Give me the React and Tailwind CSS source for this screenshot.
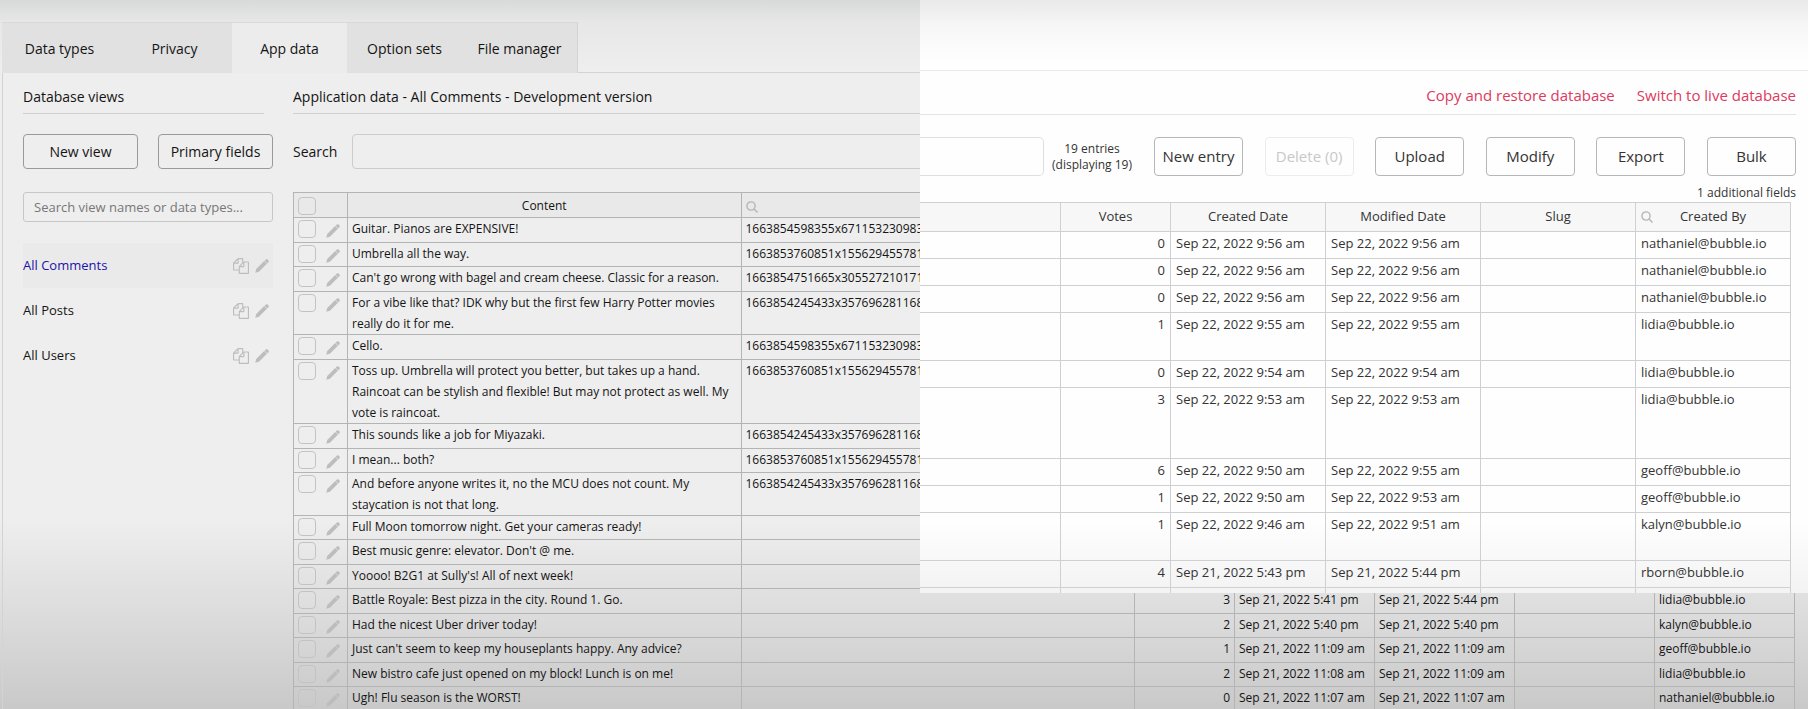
import React from "react";

const ROWS = [
  { lines: 1, text: "Guitar. Pianos are EXPENSIVE!", id: "1663854598355x671153230983", v: 0, c: "Sep 22, 2022 9:56 am", m: "Sep 22, 2022 9:56 am", by: "nathaniel@bubble.io" },
  { lines: 1, text: "Umbrella all the way.", id: "1663853760851x155629455781", v: 0, c: "Sep 22, 2022 9:56 am", m: "Sep 22, 2022 9:56 am", by: "nathaniel@bubble.io" },
  { lines: 1, text: "Can't go wrong with bagel and cream cheese. Classic for a reason.", id: "1663854751665x305527210171", v: 0, c: "Sep 22, 2022 9:56 am", m: "Sep 22, 2022 9:56 am", by: "nathaniel@bubble.io" },
  { lines: 2, text: "For a vibe like that? IDK why but the first few Harry Potter movies really do it for me.", id: "1663854245433x357696281168", v: 1, c: "Sep 22, 2022 9:55 am", m: "Sep 22, 2022 9:55 am", by: "lidia@bubble.io" },
  { lines: 1, text: "Cello.", id: "1663854598355x671153230983", v: 0, c: "Sep 22, 2022 9:54 am", m: "Sep 22, 2022 9:54 am", by: "lidia@bubble.io" },
  { lines: 3, text: "Toss up. Umbrella will protect you better, but takes up a hand. Raincoat can be stylish and flexible! But may not protect as well. My vote is raincoat.", id: "1663853760851x155629455781", v: 3, c: "Sep 22, 2022 9:53 am", m: "Sep 22, 2022 9:53 am", by: "lidia@bubble.io" },
  { lines: 1, text: "This sounds like a job for Miyazaki.", id: "1663854245433x357696281168", v: 6, c: "Sep 22, 2022 9:50 am", m: "Sep 22, 2022 9:55 am", by: "geoff@bubble.io" },
  { lines: 1, text: "I mean... both?", id: "1663853760851x155629455781", v: 1, c: "Sep 22, 2022 9:50 am", m: "Sep 22, 2022 9:53 am", by: "geoff@bubble.io" },
  { lines: 2, text: "And before anyone writes it, no the MCU does not count. My staycation is not that long.", id: "1663854245433x357696281168", v: 1, c: "Sep 22, 2022 9:46 am", m: "Sep 22, 2022 9:51 am", by: "kalyn@bubble.io" },
  { lines: 1, text: "Full Moon tomorrow night. Get your cameras ready!", v: 4, c: "Sep 21, 2022 5:43 pm", m: "Sep 21, 2022 5:44 pm", by: "rborn@bubble.io" },
  { lines: 1, text: "Best music genre: elevator. Don't @ me." },
  { lines: 1, text: "Yoooo! B2G1 at Sully's! All of next week!" },
  { lines: 1, text: "Battle Royale: Best pizza in the city. Round 1. Go.", v: 3, c: "Sep 21, 2022 5:41 pm", m: "Sep 21, 2022 5:44 pm", by: "lidia@bubble.io" },
  { lines: 1, text: "Had the nicest Uber driver today!", v: 2, c: "Sep 21, 2022 5:40 pm", m: "Sep 21, 2022 5:40 pm", by: "kalyn@bubble.io" },
  { lines: 1, text: "Just can't seem to keep my houseplants happy. Any advice?", v: 1, c: "Sep 21, 2022 11:09 am", m: "Sep 21, 2022 11:09 am", by: "geoff@bubble.io" },
  { lines: 1, text: "New bistro cafe just opened on my block! Lunch is on me!", v: 2, c: "Sep 21, 2022 11:08 am", m: "Sep 21, 2022 11:09 am", by: "lidia@bubble.io" },
  { lines: 1, text: "Ugh! Flu season is the WORST!", v: 0, c: "Sep 21, 2022 11:07 am", m: "Sep 21, 2022 11:07 am", by: "nathaniel@bubble.io" },
];

// The magnified panel shows the first ten rows; the last rows remain readable beneath it.
const PANEL_ROWS = ROWS.slice(0, 10);
const FIRST_UNCOVERED = 12;
const PANEL_HEIGHT = { 1: "h-[27px]", 2: "h-12", 3: "h-[71px]" };

const TABS = ["Data types", "Privacy", "App data", "Option sets", "File manager"];
const VIEWS = ["All Comments", "All Posts", "All Users"];
const ACTIONS = ["New entry", "Delete (0)", "Upload", "Modify", "Export", "Bulk"];

function Pencil() {
  return (
    <svg viewBox="0 0 14 14" className="size-3.5 fill-[#bcbebd]" aria-hidden="true">
      <path d="M0.3 13.7 1.2 10.1 9.2 2.1 11.9 4.8 3.9 12.8ZM9.6 1.7 10.8 0.6Q11.8 -0.2 12.7 0.6L13.4 1.3Q14.2 2.2 13.4 3.2L12.3 4.4Z" />
    </svg>
  );
}

function Files() {
  return (
    <svg viewBox="0 0 1792 1792" className="size-4 fill-[#bcbebd]" aria-hidden="true">
      <path d="M1696 384q40 0 68 28t28 68v1216q0 40-28 68t-68 28h-960q-40 0-68-28t-28-68v-288h-544q-40 0-68-28t-28-68v-672q0-40 20-88t48-76l408-408q28-28 76-48t88-20h416q40 0 68 28t28 68v328q68-40 128-40h416zm-544 213l-299 299h299v-299zm-640-384l-299 299h299v-299zm196 647l316-316v-416h-384v416q0 40-28 68t-68 28h-416v640h512v-256q0-40 20-88t48-76zm956 804v-1152h-384v416q0 40-28 68t-68 28h-416v640h896z" />
    </svg>
  );
}

function Magnifier() {
  return (
    <svg viewBox="0 0 12 12" className="size-3 fill-none stroke-[#b4b6b5] stroke-[1.4]" aria-hidden="true">
      <circle cx="5" cy="5" r="4.1" />
      <path d="M8 8 11.5 11.5" />
    </svg>
  );
}

function Check({ label }) {
  return (
    <input
      type="checkbox"
      aria-label={label}
      className="block size-[18px] shrink-0 appearance-none rounded-[4px] border border-[#c2c4c3]"
    />
  );
}

function Sidebar() {
  return (
    <aside className="w-[250px] shrink-0">
      <h2 className="mr-[9px] h-[41px] border-b border-[#cfd0d0] pt-3 text-[14px] leading-6">Database views</h2>
      <div className="mt-5 flex justify-between">
        {["New view", "Primary fields"].map((b) => (
          <button key={b} type="button" className="h-[35px] w-[115px] rounded-[4px] border border-[#999b9b] text-[14px]">
            {b}
          </button>
        ))}
      </div>
      <input
        type="search"
        aria-label="Search view names or data types"
        placeholder="Search view names or data types..."
        className="mt-[23px] block h-[30px] w-full rounded-[3px] border border-[#c6c8c8] px-2.5 text-[13px] placeholder:text-[#777]"
      />
      <ul className="mt-[21px]">
        {VIEWS.map((v, i) => (
          <li key={v} className={`flex h-[45px] items-center ${i === 0 ? "bg-[#eaeaea] text-[#1d12a6]" : ""}`}>
            <a href="#view" className="flex-1 text-[13px]">{v}</a>
            <button type="button" aria-label={`Copy ${v}`} className="mr-1.5"><Files /></button>
            <button type="button" aria-label={`Edit ${v}`} className="mr-1"><Pencil /></button>
          </li>
        ))}
      </ul>
    </aside>
  );
}

function EntriesTable() {
  const cell = "border border-[#b3b4b4] px-1 py-0 align-top";
  return (
    <table className="w-full table-fixed border-collapse text-[12px] leading-[21px]">
      <colgroup>
        <col className="w-[54px]" />
        <col />
        <col />
        <col className="w-[100px]" />
        <col className="w-[140px]" />
        <col className="w-[140px]" />
        <col className="w-[140px]" />
        <col className="w-[140px]" />
      </colgroup>
      <thead>
        <tr className="h-[25px] bg-black/[0.02]">
          <th className={`${cell} pt-1`}><Check label="Select all" /></th>
          <th className={`${cell} pt-0.5 font-normal`}>Content</th>
          <th className={`${cell} pt-2`}><Magnifier /></th>
          <th className={cell} /><th className={cell} /><th className={cell} /><th className={cell} /><th className={cell} />
        </tr>
      </thead>
      <tbody>
        {ROWS.map((r, i) => {
          const open = i >= FIRST_UNCOVERED;
          return (
            <tr key={r.text} className={r.lines > 1 ? "" : "odd:h-[25px] even:h-6"}>
              <td className={cell}>
                <div className="flex items-start justify-between pt-0.5 pr-[3px]">
                  <Check label={`Select ${r.text}`} />
                  <button type="button" aria-label={`Edit ${r.text}`} className="pt-1"><Pencil /></button>
                </div>
              </td>
              <td className={cell}>{r.text}</td>
              <td className={cell}>{r.id}</td>
              <td className={`${cell} text-right`}>{open && r.v}</td>
              <td className={cell}>{open && r.c}</td>
              <td className={cell}>{open && r.m}</td>
              <td className={cell} />
              <td className={cell}>{open && r.by}</td>
            </tr>
          );
        })}
      </tbody>
    </table>
  );
}

function MagnifiedPanel() {
  const cell = "border border-[#cfd0d2] px-[5px] py-0 align-top";
  const head = `${cell} pt-0.5 font-normal`;
  return (
    <section className="absolute top-0 right-0 left-[920px] h-[593px] overflow-hidden bg-[linear-gradient(#e9e9e9,#f6f6f6_24px,#fefefe_60px,#fefefe_520px,#f3f3f3)] text-[#333]">
      <div className="h-[71px] border-b border-[#ebebeb]" />
      <div className="mr-3 flex h-11 items-center justify-end gap-[22px] border-b border-[#e4e4e4] pt-1.5 text-[15px] text-[#dc3a60]">
        <a href="#copy">Copy and restore database</a>
        <a href="#live">Switch to live database</a>
      </div>
      <div className="mt-[22px] mr-3 flex h-[39px] items-stretch">
        <input type="text" aria-label="Search entries" className="w-0 flex-1 rounded-r-[5px] border border-l-0 border-[#dedede]" />
        <p className="w-[110px] pt-1 pr-3.5 text-center text-[12px] leading-4 whitespace-nowrap">
          19 entries<br />(displaying 19)
        </p>
        <div className="flex w-[642px] justify-between">
          {ACTIONS.map((a) => (
            <button
              key={a}
              type="button"
              disabled={a === "Delete (0)"}
              className="w-[89px] rounded-[4px] border border-[#b4b6b8] text-[15px] whitespace-nowrap disabled:border-[#ececec] disabled:text-[#c8c8c8]"
            >
              {a}
            </button>
          ))}
        </div>
      </div>
      <p className="mt-2 mr-3 text-right text-[12px] leading-[18px]">1 additional fields</p>
      <div className="mr-[17px]">
        <table className="w-full table-fixed border-collapse text-[13px] leading-[23px]">
          <colgroup>
            <col />
            <col className="w-[110px]" />
            <col className="w-[155px]" />
            <col className="w-[155px]" />
            <col className="w-[155px]" />
            <col className="w-[155px]" />
          </colgroup>
          <thead>
            <tr className="h-[29px] bg-[#f7f7f8]">
              <th className={`${head} border-l-0`} />
              <th className={head}>Votes</th>
              <th className={head}>Created Date</th>
              <th className={head}>Modified Date</th>
              <th className={head}>Slug</th>
              <th className={head}>
                <span className="flex items-center">
                  <Magnifier />
                  <span className="flex-1 pr-3">Created By</span>
                </span>
              </th>
            </tr>
          </thead>
          <tbody>
            {PANEL_ROWS.map((r) => (
              <tr key={r.text} className={PANEL_HEIGHT[r.lines]}>
                <td className={`${cell} border-l-0`} />
                <td className={`${cell} text-right`}>{r.v}</td>
                <td className={cell}>{r.c}</td>
                <td className={cell}>{r.m}</td>
                <td className={cell} />
                <td className={cell}>{r.by}</td>
              </tr>
            ))}
            <tr className="h-[27px]">
              <td className={`${cell} border-l-0`} />
              <td className={cell} /><td className={cell} /><td className={cell} /><td className={cell} /><td className={cell} />
            </tr>
          </tbody>
        </table>
      </div>
    </section>
  );
}

export default function App() {
  return (
    <div className="relative h-screen overflow-hidden bg-[linear-gradient(#d8dad9,#e6e7e6_22px,#eeeeee_70px,#eeeeee_520px,#dedede_605px,#c9c9c9)] font-['Open_Sans','Noto_Sans',sans-serif] text-[#141414]">
      <div className="pt-[22px] pl-0.5">
        <nav className="flex h-[51px]">
          {TABS.map((t) => (
            <a
              key={t}
              href="#tab"
              className={`flex w-[115px] items-center justify-center border-t border-[#d8d9d9] text-[14px] ${t === "App data" ? "bg-[#ececec]" : "bg-[#e1e1e1]"}`}
            >
              {t}
            </a>
          ))}
          <div className="flex-1 border-b border-l border-[#d2d3d3]" />
        </nav>
        <div className="flex h-screen gap-5 border-l border-[#d2d3d3] pr-[13px] pl-5">
          <Sidebar />
          <main className="min-w-0 flex-1">
            <h1 className="h-[41px] border-b border-[#cfd0d0] pt-3 text-[14px] leading-6">
              Application data - All Comments - Development version
            </h1>
            <div className="mt-5 mb-[23px] flex h-[35px] items-center">
              <label htmlFor="search" className="w-[59px] text-[14px]">Search</label>
              <input id="search" type="text" className="h-full flex-1 rounded-[4px] border border-[#cbcccc]" />
            </div>
            <EntriesTable />
          </main>
        </div>
      </div>
      <MagnifiedPanel />
    </div>
  );
}
